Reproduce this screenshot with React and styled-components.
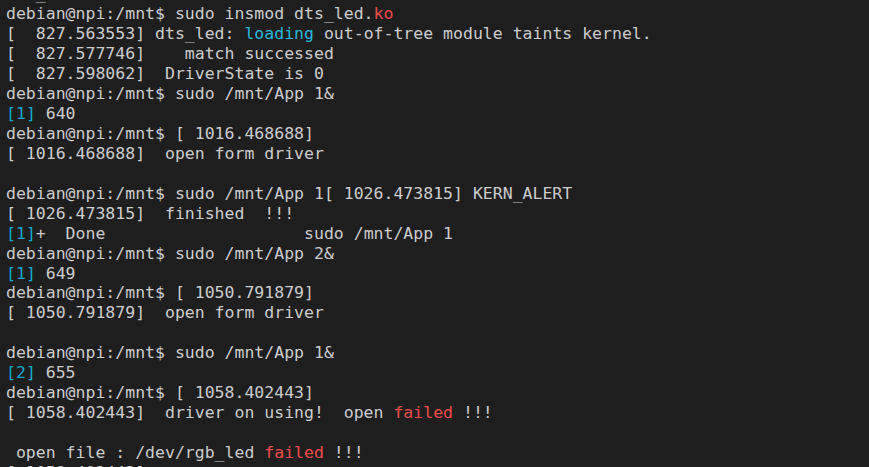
import React from 'react';
import styled, { createGlobalStyle } from 'styled-components';

const GlobalStyle = createGlobalStyle`
  html, body {
    margin: 0;
    padding: 0;
    background: #1e1e1e;
    overflow: hidden;
  }
`;

const Terminal = styled.div`
  width: 869px;
  height: 467px;
  overflow: hidden;
  background-color: #1e1e1e;
  color: #cccccc;
  font-family: 'DejaVu Sans Mono', 'Liberation Mono', monospace;
  font-size: 16.5px;
  line-height: 19.95px;
  padding-left: 6px;
  box-sizing: border-box;
`;

const Scrollback = styled.div`
  margin-top: -15.6px;
`;

const Line = styled.div`
  white-space: pre;
  height: 19.95px;
`;

const toneColors = {
  cyan: '#11a8cd',
  blue: '#29b8db',
  red: '#f14c4c',
};

const Tone = styled.span`
  color: ${(p) => toneColors[p.$tone] || 'inherit'};
`;

const Job = ({ n }) => <Tone $tone="cyan">[{n}]</Tone>;

const App = () => {
  return (
    <>
      <GlobalStyle />
      <Terminal>
        <Scrollback>
          <Line>{'   _'}</Line>
          <Line>
            debian@npi:/mnt$ sudo insmod dts_led.<Tone $tone="red">ko</Tone>
          </Line>
          <Line>
            {'[  827.563553] dts_led: '}
            <Tone $tone="blue">loading</Tone>
            {' out-of-tree module taints kernel.'}
          </Line>
          <Line>{'[  827.577746]    match successed'}</Line>
          <Line>{'[  827.598062]  DriverState is 0'}</Line>
          <Line>{'debian@npi:/mnt$ sudo /mnt/App 1&'}</Line>
          <Line>
            <Job n={1} />
            {' 640'}
          </Line>
          <Line>{'debian@npi:/mnt$ [ 1016.468688]'}</Line>
          <Line>{'[ 1016.468688]  open form driver'}</Line>
          <Line />
          <Line>{'debian@npi:/mnt$ sudo /mnt/App 1[ 1026.473815] KERN_ALERT'}</Line>
          <Line>{'[ 1026.473815]  finished  !!!'}</Line>
          <Line>
            <Job n={1} />
            {'+  Done                    sudo /mnt/App 1'}
          </Line>
          <Line>{'debian@npi:/mnt$ sudo /mnt/App 2&'}</Line>
          <Line>
            <Job n={1} />
            {' 649'}
          </Line>
          <Line>{'debian@npi:/mnt$ [ 1050.791879]'}</Line>
          <Line>{'[ 1050.791879]  open form driver'}</Line>
          <Line />
          <Line>{'debian@npi:/mnt$ sudo /mnt/App 1&'}</Line>
          <Line>
            <Job n={2} />
            {' 655'}
          </Line>
          <Line>{'debian@npi:/mnt$ [ 1058.402443]'}</Line>
          <Line>
            {'[ 1058.402443]  driver on using!  open '}
            <Tone $tone="red">failed</Tone>
            {' !!!'}
          </Line>
          <Line />
          <Line>
            {' open file : /dev/rgb_led '}
            <Tone $tone="red">failed</Tone>
            {' !!!'}
          </Line>
          <Line>{'[ 1058.402443]'}</Line>
        </Scrollback>
      </Terminal>
    </>
  );
};

export default App;
